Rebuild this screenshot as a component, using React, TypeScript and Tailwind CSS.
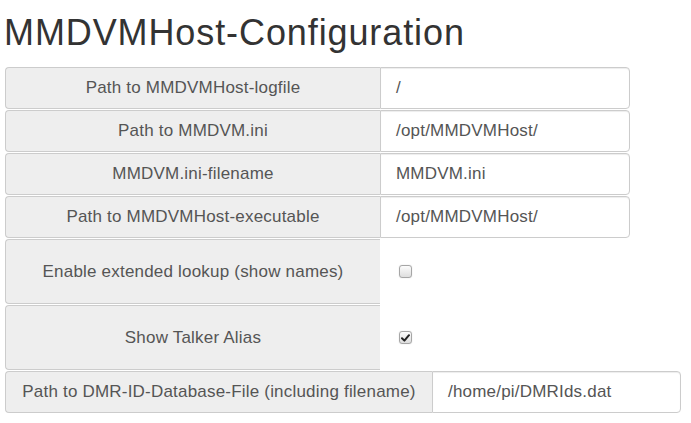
import React from 'react'

type Row =
  | { kind: 'text'; label: string; value: string }
  | { kind: 'check'; label: string; checked: boolean }

const rows: Row[] = [
  { kind: 'text', label: 'Path to MMDVMHost-logfile', value: '/' },
  { kind: 'text', label: 'Path to MMDVM.ini', value: '/opt/MMDVMHost/' },
  { kind: 'text', label: 'MMDVM.ini-filename', value: 'MMDVM.ini' },
  { kind: 'text', label: 'Path to MMDVMHost-executable', value: '/opt/MMDVMHost/' },
  { kind: 'check', label: 'Enable extended lookup (show names)', checked: false },
  { kind: 'check', label: 'Show Talker Alias', checked: true },
]

function Checkbox({ checked }: { checked: boolean }) {
  return (
    <span className="flex h-[13px] w-[13px] items-center justify-center rounded-[3px] border border-[#a6a6a6] bg-gradient-to-b from-[#fcfcfc] to-[#dedede] shadow-[0_0_1px_rgba(0,0,0,0.25)]">
      {checked && (
        <svg width="9" height="8" viewBox="0 0 9 8">
          <path d="M1 4.2 L3.4 6.6 L8 1.2" fill="none" stroke="#222" strokeWidth="2" strokeLinecap="round" strokeLinejoin="round" />
        </svg>
      )}
    </span>
  )
}

function Label({ text, width, height }: { text: string; width: string; height: string }) {
  return (
    <div
      className={`flex ${width} ${height} items-center justify-center rounded-l-[4px] border border-r-0 border-[#ccc] bg-[#eee] px-4 text-[17px] tracking-[0.2px] text-[#555]`}
    >
      {text}
    </div>
  )
}

export default function App() {
  return (
    <div className="min-h-[423px] bg-white pl-[5px] font-['Liberation_Sans',Arial,sans-serif]">
      <h1 className="mb-[14px] ml-[-1px] pt-[13px] text-[36px] leading-[40px] tracking-[0.9px] text-[#333]">
        MMDVMHost-Configuration
      </h1>
      <div className="flex flex-col gap-px">
        {rows.map((row) =>
          row.kind === 'text' ? (
            <div key={row.label} className="flex">
              <Label text={row.label} width="w-[375px]" height="h-[42px]" />
              <div className="flex h-[42px] w-[250px] items-center rounded-r-[4px] border border-[#ccc] bg-white pl-[15px] text-[17px] tracking-[0.2px] text-[#555] shadow-[inset_0_1px_1px_rgba(0,0,0,0.075)]">
                {row.value}
              </div>
            </div>
          ) : (
            <div key={row.label} className="flex">
              <Label text={row.label} width="w-[375px]" height="h-[65px]" />
              <div className="flex h-[65px] w-[250px] items-center pl-[19px]">
                <Checkbox checked={row.checked} />
              </div>
            </div>
          )
        )}
        <div className="flex">
          <Label text="Path to DMR-ID-Database-File (including filename)" width="w-[427px]" height="h-[42px]" />
          <div className="flex h-[42px] w-[249px] items-center rounded-r-[4px] border border-[#ccc] bg-white pl-[15px] text-[17px] tracking-[0.2px] text-[#555] shadow-[inset_0_1px_1px_rgba(0,0,0,0.075)]">
            /home/pi/DMRIds.dat
          </div>
        </div>
      </div>
    </div>
  )
}
